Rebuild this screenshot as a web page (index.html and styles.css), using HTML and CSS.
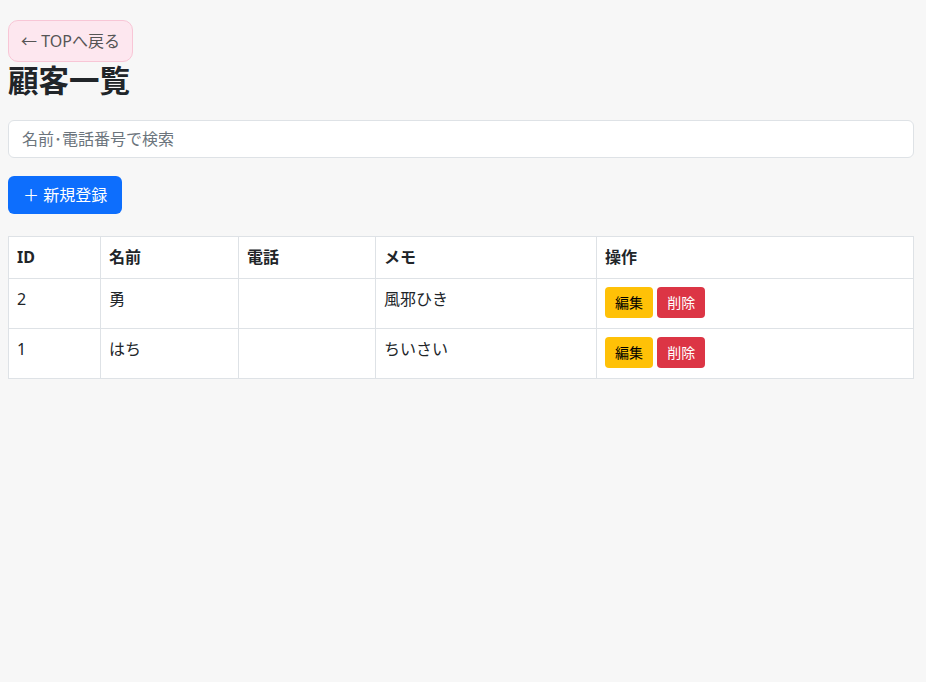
FILE: index.html
```html
<!DOCTYPE html>
<html lang="ja">
<head>
  <meta charset="UTF-8">
  <meta name="viewport" content="width=device-width, initial-scale=1">
  <title>顧客一覧</title>
  <link rel="stylesheet" href="styles.css">
</head>
<body>
  <div class="page">
    <a href="#" class="back-link">← TOPへ戻る</a>
    <h2 class="title">顧客一覧</h2>

    <!-- 検索 -->
    <input type="text" class="search" placeholder="名前･電話番号で検索">

    <button type="button" class="btn btn-primary">＋ 新規登録</button>

    <table class="customer-table">
      <thead>
        <tr>
          <th class="col-id">ID</th>
          <th class="col-name">名前</th>
          <th class="col-tel">電話</th>
          <th class="col-memo">メモ</th>
          <th>操作</th>
        </tr>
      </thead>
      <tbody>
        <tr>
          <td>2</td>
          <td>勇</td>
          <td></td>
          <td>風邪ひき</td>
          <td>
            <button type="button" class="btn btn-sm btn-warning">編集</button>
            <button type="button" class="btn btn-sm btn-danger">削除</button>
          </td>
        </tr>
        <tr>
          <td>1</td>
          <td>はち</td>
          <td></td>
          <td>ちいさい</td>
          <td>
            <button type="button" class="btn btn-sm btn-warning">編集</button>
            <button type="button" class="btn btn-sm btn-danger">削除</button>
          </td>
        </tr>
      </tbody>
    </table>
  </div>
</body>
</html>
```

FILE: styles.css
```css
* {
  box-sizing: border-box;
}
body {
  margin: 0;
  background: #f7f7f7;
  color: #212529;
  font-family: "Noto Sans", "Noto Sans CJK JP", sans-serif;
  font-size: 16px;
  line-height: 1.5;
}
.page {
  padding: 20px 12px 20px 8px;
}
.back-link {
  display: inline-block;
  padding: 8px 12px;
  background: #fde7ef;
  border: 1px solid #f8c6d6;
  border-radius: 10px;
  color: #555;
  text-decoration: none;
}
.title {
  margin: 0 0 21px;
  font-size: 30.5px;
  line-height: 1.2;
  font-weight: 700;
}
.search {
  display: block;
  width: 100%;
  height: 38px;
  padding: 6px 13px;
  margin-bottom: 18px;
  font: inherit;
  color: #212529;
  background: #fff;
  border: 1px solid #dee2e6;
  border-radius: 6px;
}
.search::placeholder {
  color: #6c757d;
}
.btn {
  display: inline-block;
  font: inherit;
  border: 1px solid transparent;
  border-radius: 6px;
  padding: 6px 14px;
  cursor: pointer;
}
.btn-primary {
  background: #0d6efd;
  color: #fff;
  margin-bottom: 22px;
}
.btn-sm {
  font-size: 14px;
  padding: 4px 9px;
  border-radius: 4px;
}
.btn-warning {
  background: #ffc107;
  color: #000;
}
.btn-danger {
  background: #dc3545;
  color: #fff;
}
.customer-table {
  width: 100%;
  border-collapse: collapse;
  background: #fff;
}
.customer-table th,
.customer-table td {
  border: 1px solid #dee2e6;
  padding: 8px;
  text-align: left;
  vertical-align: top;
}
.customer-table th {
  font-weight: 700;
  padding-bottom: 9px;
}
.customer-table td {
  padding-bottom: 10px;
}
.col-id { width: 92px; }
.col-name { width: 138px; }
.col-tel { width: 137px; }
.col-memo { width: 221px; }
```
